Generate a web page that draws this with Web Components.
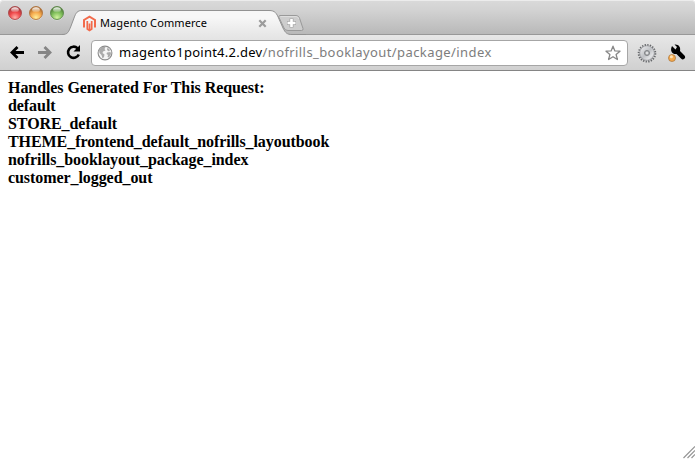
<!DOCTYPE html>
<html lang="en"><head><meta charset="utf-8"><title>Magento Commerce</title>
<style>html,body{margin:0;height:100%;overflow:hidden;background:#fff}</style></head>
<body>
<browser-window>
  <tab-strip slot="tabs"><browser-tab>Magento Commerce</browser-tab></tab-strip>
  <tool-bar slot="tools"><address-field><span>magento1point4.2.dev</span><span slot="path">/nofrills_booklayout/package/index</span></address-field></tool-bar>
  <page-view>
    <div>Handles Generated For This Request:</div>
    <div>default</div>
    <div>STORE_default</div>
    <div>THEME_frontend_default_nofrills_layoutbook</div>
    <div>nofrills_booklayout_package_index</div>
    <div>customer_logged_out</div>
  </page-view>
</browser-window>
<script>
const define = (name, html) => customElements.define(name, class extends HTMLElement {
  constructor() { super(); this.attachShadow({mode: 'open'}).innerHTML = html; }
});

define('browser-window', `<style>
:host{display:flex;flex-direction:column;width:695px;height:459px;background:#fff;position:relative}
.grip{position:absolute;right:0;bottom:0}
</style><slot name="tabs"></slot><slot name="tools"></slot><slot></slot>
<svg class="grip" width="13" height="13" viewBox="0 0 13 13" fill="none" stroke="#959595" stroke-width="1.200"><path d="M1.500 12L13 .5M5.500 12L13 4.500M9.500 12L13 8.500"/></svg>`);

define('window-light', `<style>
:host{display:block;width:14px;height:14px}svg{display:block}
</style><svg width="14" height="15" viewBox="0 0 14 15"><defs>
<radialGradient id="g" cx=".5" cy=".85" r=".75"><stop offset="0" stop-color="var(--lo)"/><stop offset=".55" stop-color="var(--mid)"/><stop offset="1" stop-color="var(--edge)"/></radialGradient>
<linearGradient id="s" x2="0" y2="1"><stop offset="0" stop-color="#fff" stop-opacity=".95"/><stop offset="1" stop-color="#fff" stop-opacity=".1"/></linearGradient></defs>
<circle cx="7" cy="7.600" r="6.800" fill="#fff" opacity=".45"/><circle cx="7" cy="7" r="6.500" fill="url(#g)" stroke="var(--edge)" stroke-width=".8"/>
<ellipse cx="7" cy="3.800" rx="3.900" ry="2.500" fill="url(#s)"/></svg>`);

define('tab-strip', `<style>
:host{display:flex;height:35px;flex:none;box-sizing:border-box;padding-left:8px;background:linear-gradient(#dadada,#d2d2d2 30%,#b9b9b9 96%);box-shadow:inset 0 1px #ececec,inset 0 -1px #989898;border-radius:4px 4px 0 0}
.lights{display:flex;gap:7px;padding-top:6px;width:54px}
.r{--lo:#ffb0a8;--mid:#f0484a;--edge:#a33b3d}.y{--lo:#ffef9a;--mid:#f5a94c;--edge:#a96a30}.g{--lo:#d3f3a0;--mid:#80bf5b;--edge:#517f3c}
svg{display:block;margin:13px 0 0 -30px}
</style><div class="lights"><window-light class="r"></window-light><window-light class="y"></window-light><window-light class="g"></window-light></div>
<slot></slot>
<svg width="31" height="20" viewBox="0 0 31 20"><path d="M3.500 2.500H20Q22.500 2.500 23.500 5L27 15.500Q27.500 17.500 25.500 17.500H12Q9 17.500 8 15L3 4.500Q2.500 2.500 3.500 2.500Z" fill="#cdcdcd" stroke="#999"/><path d="M4.500 3.500H20Q22 3.500 23 6" fill="none" stroke="#e2e2e2" stroke-width=".8"/><path d="M15.500 5.500V14.500M11 10H20" stroke="#a4a4a4" stroke-width="4"/><path d="M15.500 6V14M11.500 10H19.500" stroke="#fff" stroke-width="2.600"/></svg>`);

define('browser-tab', `<style>
:host{display:grid;width:244px;height:35px;flex:none;font:11px "Noto Sans","Open Sans",sans-serif;color:#000}
.shape,.content{grid-area:1/1}.shape{display:block}
.content{display:flex;align-items:center;box-sizing:border-box;padding:12px 39px 1px 20px;height:35px}
.logo{flex:none}.title{margin-left:3px;flex:1;white-space:nowrap;line-height:18px;letter-spacing:.09px}
</style><svg class="shape" width="244" height="35" viewBox="0 0 244 35"><defs><linearGradient id="t" x2="0" y2="1"><stop offset=".28" stop-color="#f7f7f7"/><stop offset="1" stop-color="#e7e7e7"/></linearGradient></defs>
<path d="M0 35V34.500C6 34.500 6.500 32 9 26L12 18C14 12.500 15.500 10.500 20 10.500H207C213 10.500 214.500 13 217 19L221 28C223.500 33 225 34.500 230 34.500H244V35Z" fill="url(#t)"/>
<path d="M0 34.500C6 34.500 6.500 32 9 26L12 18C14 12.500 15.500 10.500 20 10.500H207C213 10.500 214.500 13 217 19L221 28C223.500 33 225 34.500 230 34.500H244" fill="none" stroke="#929292"/></svg>
<div class="content"><svg class="logo" width="15" height="17" viewBox="0 0 15 17" fill="none" stroke="#f26b4c" stroke-width="2"><path d="M2 12.500V5L7.500 1.700L13 5V12.500"/><path d="M5.300 6V14L7.500 15.400L9.700 14V6M7.500 8.500V14.500" stroke-width="1.700"/></svg>
<span class="title"><slot></slot></span>
<svg width="9" height="9" viewBox="0 0 9 9"><path d="M1.300 1.300L7.700 7.700M7.700 1.300L1.300 7.700" stroke="#9c9c9c" stroke-width="2.200"/></svg></div>`);

define('tool-bar', `<style>
:host{display:flex;align-items:center;height:36px;flex:none;box-sizing:border-box;padding:0 8px 0 9px;border-bottom:1px solid #858585;background:linear-gradient(#e7e7e7,#d0d0d0)}
svg{flex:none;display:block}.fwd{margin-left:11px}.reload{margin-left:11px}.gear{margin-left:9px}.wrench{margin-left:11px}
slot{display:contents}
</style>
<svg width="17" height="16" viewBox="0 0 17 16" fill="none" stroke="#000" stroke-width="2.800"><path d="M15 7.500H4M8.500 2L3 7.500L8.500 13"/></svg>
<svg class="fwd" width="17" height="16" viewBox="0 0 17 16" fill="none" stroke="#858585" stroke-width="2.800"><path d="M1 7.500H12M7.500 2L13 7.500L7.500 13"/></svg>
<svg class="reload" width="17" height="17" viewBox="0 0 17 17"><path d="M12.500 4.200A5.600 5.600 0 1 0 13.800 10.500" fill="none" stroke="#000" stroke-width="2.600"/><path d="M15 1V7.500H8.500Z"/></svg>
<slot></slot>
<svg class="gear" width="20" height="20" viewBox="0 0 20 20"><defs><linearGradient id="m" x2="1" y2="1"><stop offset="0" stop-color="#f2f2f3"/><stop offset=".5" stop-color="#bfc1c5"/><stop offset=".75" stop-color="#e2e3e5"/><stop offset="1" stop-color="#999ba0"/></linearGradient></defs><circle cx="10" cy="10.300" r="8.200" fill="none" stroke="#66686b" stroke-width="2.200" stroke-dasharray="1.300 1.276"/><circle cx="10" cy="10" r="7.300" fill="url(#m)" stroke="#909296" stroke-width=".7"/><circle cx="10" cy="10" r="2.500" fill="#b5b7ba" stroke="#77797c" stroke-width=".9"/><circle cx="10" cy="10" r="1" fill="#eee"/></svg>
<svg class="wrench" width="19" height="20" viewBox="0 0 19 20"><path d="M5 2.500L8.500 6L10 3.500L7.500 1C11.500 .5 14 3.500 13 7.500L17.500 12Q19 14 17 15.500Q15.500 16.500 14 15L9.500 10.500C5.500 11 2.500 7.500 5 2.500Z" transform="translate(-1 .5)"/><circle cx="4" cy="15" r="3.500" fill="#f5a94d" stroke="#a87337" stroke-width=".7"/><circle cx="3.400" cy="13.800" r="1.500" fill="#ffe4b5"/></svg>`);

define('address-field', `<style>
:host{display:flex;align-items:center;box-sizing:border-box;width:537px;height:26px;margin-left:9px;padding:0 6px 0 5px;border:1px solid #a6a6a6;border-radius:4px;background:#fff;font:13px/20px "Noto Sans","Open Sans",sans-serif;letter-spacing:.26px;color:#000;white-space:nowrap}
.url{margin-left:6px;flex:1;position:relative;top:-1px}.path{color:#7d7d7d;letter-spacing:.41px}svg{flex:none}
</style><svg width="16" height="16" viewBox="0 0 16 16"><circle cx="8" cy="8" r="6.900" fill="#f4f4f4" stroke="#8c8c8c" stroke-width="1.100"/><path d="M2 5L5 2L8.500 2L7.500 4L8.500 5.500L6 6.500L5.500 8L7.500 9.500L7 12L5.500 13.500L4.500 10L2.500 8ZM10.500 2.500L13 5L12 6.500L10 5ZM10 7.500L13.500 7L14 9L12 12.500L10.500 12L11 10L9.500 9Z" fill="#aaa"/></svg>
<div class="url"><slot></slot><span class="path"><slot name="path"></slot></span></div>
<svg width="16" height="16" viewBox="0 0 16 16"><path d="M8 1.200L9.900 5.900L15 6.200L11.100 9.500L12.400 14.500L8 11.700L3.600 14.500L4.900 9.500L1 6.200L6.100 5.900Z" fill="#fff" stroke="#888" stroke-width="1.300" stroke-linejoin="round"/></svg>`);

define('page-view', `<style>
:host{display:block;flex:1;padding:8px;background:#fff;color:#000;font:bold 16px/18px "Liberation Serif",serif;letter-spacing:-.07px;white-space:nowrap}
</style><slot></slot>`);
</script>
</body></html>
